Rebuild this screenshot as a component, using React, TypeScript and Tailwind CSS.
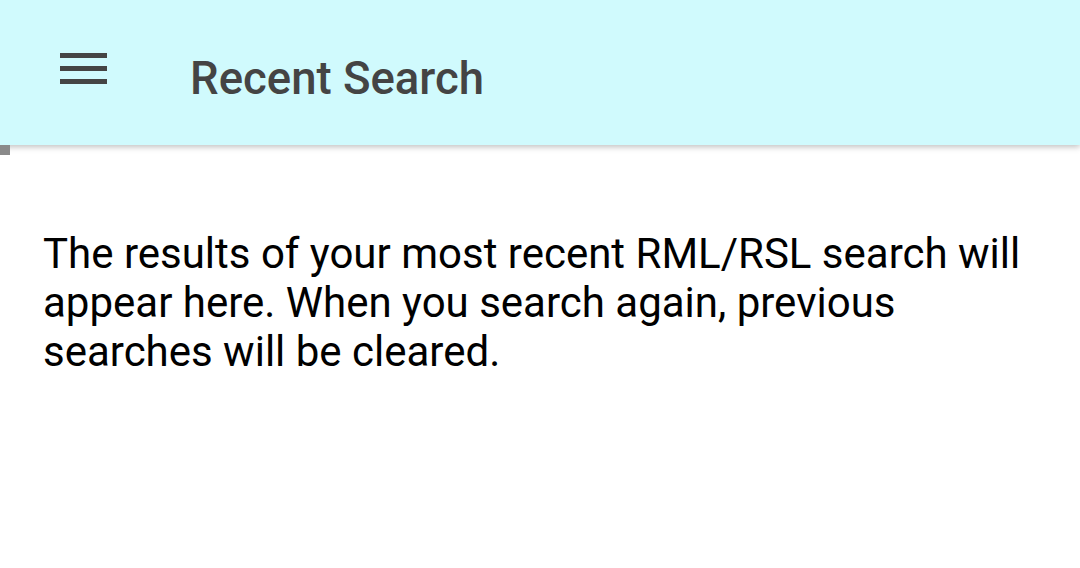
export default function App() {
  return (
    <div className="w-[1080px] h-[568px] bg-white relative overflow-hidden" style={{ fontFamily: "Roboto, 'Noto Sans', sans-serif" }}>
      <div className="h-[145px] bg-[#d0fafd] flex items-center shadow-[0_2px_6px_rgba(0,0,0,0.25)] relative z-10">
        <div className="w-[190px] h-full flex items-start pl-[60px] pt-[53px]">
          <div className="flex flex-col gap-[8px]">
            <div className="w-[47px] h-[5px] bg-[#444444]" />
            <div className="w-[47px] h-[5px] bg-[#444444]" />
            <div className="w-[47px] h-[5px] bg-[#444444]" />
          </div>
        </div>
        <div className="text-[45.5px] font-medium text-[#444444] leading-none mt-[12px]">Recent Search</div>
      </div>
      <div className="absolute left-0 top-[145px] w-[10px] h-[10px] bg-[#8a8a8a] z-20" />
      <div className="pl-[43px] w-[1040px] pt-[84px] text-[42px] leading-[49px] text-black">
        The results of your most recent RML/RSL search will appear here. When you search again, previous searches will be cleared.
      </div>
    </div>
  );
}
